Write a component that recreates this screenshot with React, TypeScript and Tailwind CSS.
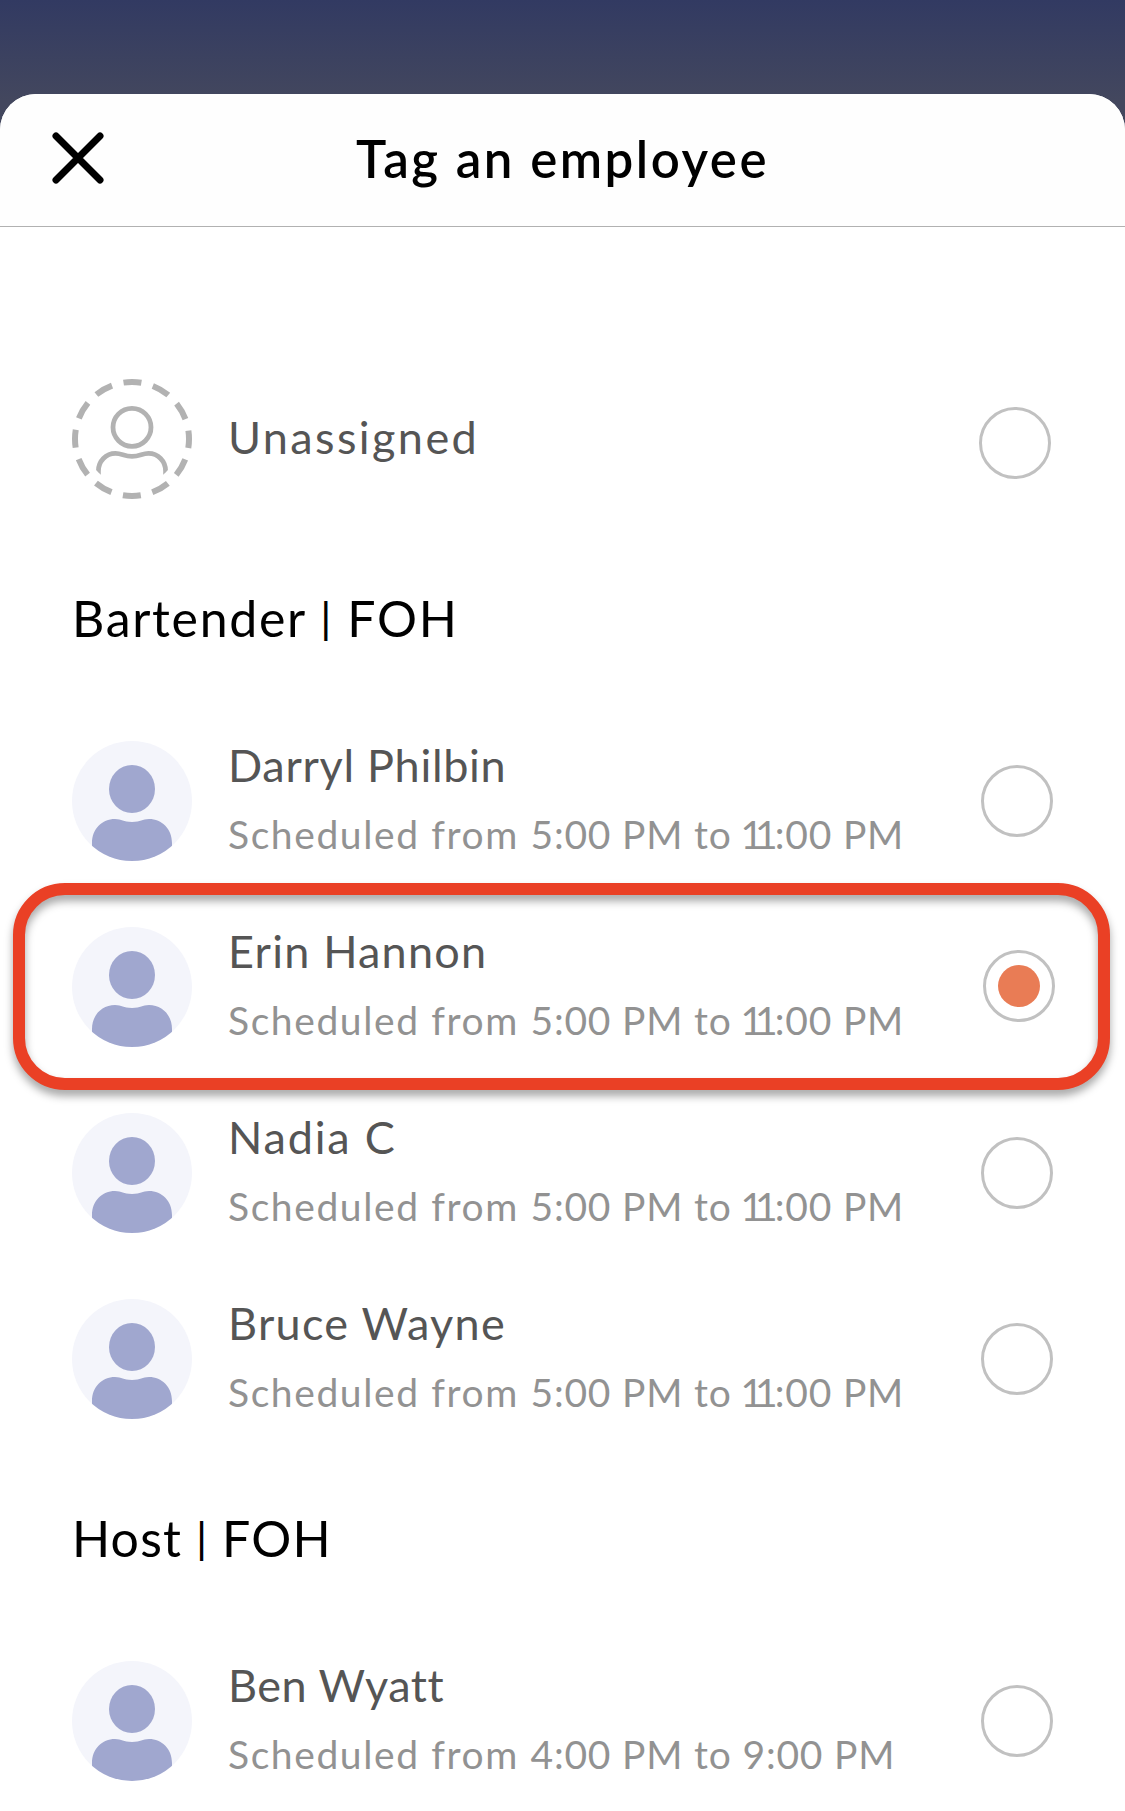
import { useState } from 'react'

interface Employee {
  name: string
  nameClass: string
  start: string
  end: string
}

interface Section {
  title: string
  area: string
  titleClass: string
  employees: Employee[]
}

const SECTIONS: Section[] = [
  {
    title: 'Bartender',
    area: 'FOH',
    titleClass: 'tracking-[1.7px]',
    employees: [
      { name: 'Darryl Philbin', nameClass: 'tracking-[0.7px]', start: '5:00 PM', end: '11:00 PM' },
      { name: 'Erin Hannon', nameClass: 'tracking-[1.2px]', start: '5:00 PM', end: '11:00 PM' },
      { name: 'Nadia C', nameClass: 'tracking-[1.8px]', start: '5:00 PM', end: '11:00 PM' },
      { name: 'Bruce Wayne', nameClass: 'tracking-[1.3px]', start: '5:00 PM', end: '11:00 PM' }
    ]
  },
  {
    title: 'Host',
    area: 'FOH',
    titleClass: 'tracking-[1.2px]',
    employees: [
      { name: 'Ben Wyatt', nameClass: 'tracking-[0.5px]', start: '4:00 PM', end: '9:00 PM' }
    ]
  }
]

function CloseIcon() {
  return (
    <svg width="52" height="52" viewBox="0 0 52 52" fill="none" stroke="#000" strokeWidth="7" strokeLinecap="round">
      <path d="M4 4L48 48M48 4L4 48" />
    </svg>
  )
}

function Avatar() {
  return (
    <svg className="shrink-0" width="120" height="120" viewBox="0 0 120 120">
      <clipPath id="avatar-clip">
        <circle cx="60" cy="60" r="60" />
      </clipPath>
      <circle cx="60" cy="60" r="60" fill="#f4f5fb" />
      <g clipPath="url(#avatar-clip)" fill="#a0a7cf">
        <ellipse cx="60" cy="48" rx="23" ry="24" />
        <path d="M20 120V102C20 88 30 78 43 78C50 78 51 81 60 81C69 81 70 78 77 78C90 78 100 88 100 102V120Z" />
      </g>
    </svg>
  )
}

function UnassignedAvatar() {
  return (
    <svg className="shrink-0" width="120" height="120" viewBox="0 0 120 120" fill="none" stroke="#b2b2b2">
      <clipPath id="unassigned-clip">
        <circle cx="60" cy="60" r="47.5" />
      </clipPath>
      <circle cx="60" cy="60" r="57" strokeWidth="6" strokeDasharray="18 11.845" strokeDashoffset="9" />
      <circle cx="60" cy="48.3" r="19" strokeWidth="4.8" />
      <path
        clipPath="url(#unassigned-clip)"
        strokeWidth="4.8"
        d="M26.4 100V92C26.4 82 34 74.4 43.5 74.4C50 74.4 52 77.4 60 77.4C68 77.4 70 74.4 76.5 74.4C86 74.4 93.6 82 93.6 92V100"
      />
    </svg>
  )
}

function Radio({ checked, className = '' }: { checked: boolean; className?: string }) {
  return (
    <span
      className={`ml-auto size-[72px] shrink-0 rounded-full border-[3px] border-[#c1c1c1] bg-white flex items-center justify-center ${className}`}
    >
      {checked && <span className="size-[42px] rounded-full bg-[#e97c55]" />}
    </span>
  )
}

// Pull two-digit hours together so the ones don't drift apart
function Time({ value }: { value: string }) {
  const [hour, rest] = value.split(':')
  if (hour.length === 1) return <>{value}</>
  return (
    <>
      <span className="-ml-[2px] tracking-[-8px]">{hour[0]}</span>
      <span className="tracking-[-3px]">{hour[1]}</span>:{rest}
    </>
  )
}

export default function App() {
  const [selected, setSelected] = useState('Erin Hannon')

  return (
    <div className="w-[1125px] h-[1811px] overflow-hidden pt-[94px] bg-linear-to-b from-[#323a62] to-[#43475e] to-[100px] font-[Lato,sans-serif]">
      <div className="h-[1717px] overflow-hidden rounded-t-[36px] bg-white">
        <header className="h-[133px] border-b border-[#b1b1b1] bg-[#fefefe] grid grid-cols-[1fr_auto_1fr] items-center">
          <button className="ml-[52px] -mt-[5px] justify-self-start">
            <CloseIcon />
          </button>
          <h1 className="-mt-[2px] text-[51px] leading-[60px] font-semibold tracking-[2.5px] text-black">Tag an employee</h1>
        </header>

        <main className="px-[72px] pt-[119px]">
          <button onClick={() => setSelected('')} className="w-full h-[186px] flex items-center text-left">
            <UnassignedAvatar />
            <span className="ml-[36px] mb-[5px] text-[45px] leading-[54px] tracking-[2.4px] text-[#555]">Unassigned</span>
            <Radio checked={selected === ''} className="mr-[2px] mt-[8px]" />
          </button>

          {SECTIONS.map(section => (
            <section key={section.title} className="pt-[56px]">
              <h2 className={`mb-[60px] h-[60px] text-[50px] leading-[60px] text-black ${section.titleClass}`}>
                {section.title} <span className="inline-block text-[42px] leading-none font-medium -translate-y-[3px]">|</span> {section.area}
              </h2>
              {section.employees.map(employee => {
                const checked = selected === employee.name
                return (
                  <div key={employee.name} className="relative">
                    <button
                      onClick={() => setSelected(employee.name)}
                      className="w-full h-[186px] flex items-center text-left"
                    >
                      <Avatar />
                      <span className="ml-[36px] mt-[-6px] flex flex-col gap-[18px]">
                        <span className={`text-[45px] leading-[54px] text-[#555] ${employee.nameClass}`}>
                          {employee.name}
                        </span>
                        <span className="text-[39px] leading-[48px] tracking-[0.8px] text-[#929292] whitespace-nowrap">
                          <span className="tracking-[1.6px]">Scheduled from </span>
                          <Time value={employee.start} /> to <Time value={employee.end} />
                        </span>
                      </span>
                      <Radio checked={checked} className={checked ? '-mr-[2px] -mt-[2px]' : ''} />
                    </button>
                    {checked && (
                      <div className="pointer-events-none absolute -top-[11px] -left-[59px] -right-[57px] h-[207px] rounded-[52px] border-[12px] border-[#ea4025] drop-shadow-[0_6px_4px_rgba(0,0,0,0.35)]" />
                    )}
                  </div>
                )
              })}
            </section>
          ))}
        </main>
      </div>
    </div>
  )
}
